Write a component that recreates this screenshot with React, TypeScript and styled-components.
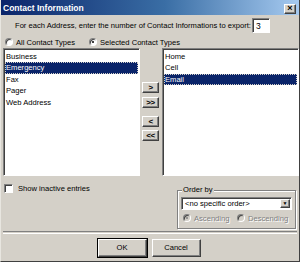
import { styled, createGlobalStyle } from "styled-components";

const GlobalStyle = createGlobalStyle`
  html, body {
    margin: 0;
    padding: 0;
    background: #d4d0c8;
  }
  body {
    font-family: "Liberation Sans", Arial, sans-serif;
    font-size: 7.6px;
    color: #000;
  }
`;

const Window = styled.div`
  width: 300px;
  height: 262px;
  box-sizing: border-box;
  background: #d4d0c8;
  border-left: 1px solid #e8e6e0;
  border-right: 1px solid #404040;
  border-bottom: 1px solid #404040;
  display: flex;
  flex-direction: column;
  overflow: hidden;
`;

const TitleBar = styled.div`
  height: 15px;
  flex-shrink: 0;
  display: flex;
  align-items: center;
  justify-content: space-between;
  padding: 0 3px 0 2px;
  background: linear-gradient(to right, #0a246a 0%, #3a6ea5 55%, #a6caf0 100%);
  color: #fff;
  font-weight: bold;
  font-size: 8.5px;
`;

const Raised = styled.button`
  box-sizing: border-box;
  margin: 0;
  padding: 0;
  background: #d4d0c8;
  border: 1px solid;
  border-color: #fff #404040 #404040 #fff;
  box-shadow: inset -1px -1px 0 #808080;
  font-family: "Liberation Sans", Arial, sans-serif;
  font-size: 7.6px;
  color: #000;
  display: flex;
  align-items: center;
  justify-content: center;
  line-height: 1;
`;

const CloseButton = styled(Raised)`
  width: 12px;
  height: 10px;
  font-size: 9px;
  font-weight: bold;
  margin-top: 2px;
`;

const ExportRow = styled.div`
  margin-top: 3px;
  height: 15px;
  padding-left: 14px;
  display: flex;
  align-items: center;
`;

const Sunken = styled.div`
  box-sizing: border-box;
  background: #fff;
  border: 1px solid;
  border-color: #808080 #fff #fff #808080;
  box-shadow: inset 1px 1px 0 #404040;
`;

const CountBox = styled(Sunken)`
  width: 18px;
  height: 15px;
  margin-left: 1px;
  padding: 2px 0 0 3px;
  font-size: 8.5px;
`;

const RadioRow = styled.div`
  margin-top: 4px;
  height: 10px;
  padding-left: 4px;
  display: flex;
  align-items: center;
`;

const RadioLabel = styled.label<{ $disabled?: boolean; $width?: number }>`
  display: flex;
  align-items: center;
  gap: 3px;
  width: ${(p) => (p.$width ? `${p.$width}px` : "auto")};
  color: ${(p) => (p.$disabled ? "#808080" : "#000")};
  text-shadow: ${(p) => (p.$disabled ? "1px 1px 0 #fff" : "none")};
  white-space: nowrap;
`;

const RadioDot = styled.span<{ $on?: boolean; $disabled?: boolean }>`
  position: relative;
  width: 8px;
  height: 8px;
  flex-shrink: 0;
  box-sizing: border-box;
  border-radius: 50%;
  border: 1px solid;
  border-color: #808080 #fff #fff #808080;
  box-shadow: inset 1px 1px 0 #404040;
  background: ${(p) => (p.$disabled ? "#d4d0c8" : "#fff")};

  &::after {
    content: "";
    display: ${(p) => (p.$on ? "block" : "none")};
    position: absolute;
    left: 2px;
    top: 2px;
    width: 2px;
    height: 2px;
    border-radius: 50%;
    background: ${(p) => (p.$disabled ? "#808080" : "#000")};
  }
`;

const ListsRow = styled.div`
  margin-top: 1px;
  height: 128px;
  padding-left: 2px;
  display: flex;
`;

const ListBox = styled(Sunken)`
  width: 137px;
  height: 100%;
  padding: 2px 1px;
  display: flex;
  flex-direction: column;
`;

const ListItem = styled.div<{ $selected?: boolean }>`
  height: 11.4px;
  line-height: 11.4px;
  padding-left: 1px;
  white-space: nowrap;
  background: ${(p) => (p.$selected ? "#0a246a" : "transparent")};
  color: ${(p) => (p.$selected ? "#fff" : "#000")};
  outline: ${(p) => (p.$selected ? "1px dotted #d4d0c8" : "none")};
  outline-offset: -1px;
`;

const MoveColumn = styled.div`
  width: 17px;
  margin: 0 3px 0 2px;
  padding-top: 34px;
  display: flex;
  flex-direction: column;
`;

const MoveButton = styled(Raised)<{ $gap: number }>`
  width: 17px;
  height: 11px;
  margin-top: ${(p) => p.$gap}px;
  font-weight: bold;
  font-size: 8px;
  letter-spacing: -0.5px;
`;

const BottomArea = styled.div`
  height: 55px;
  display: flex;
  justify-content: space-between;
  padding: 0 3px 0 3px;
`;

const CheckLabel = styled.label`
  margin-top: 8px;
  height: 9px;
  display: flex;
  align-items: center;
  gap: 5px;
  white-space: nowrap;
`;

const CheckBox = styled.span`
  width: 9px;
  height: 9px;
  box-sizing: border-box;
  background: #fff;
  border: 1px solid;
  border-color: #808080 #fff #fff #808080;
  box-shadow: inset 1px 1px 0 #404040;
`;

const GroupBox = styled.div`
  position: relative;
  margin-top: 14px;
  width: 119px;
  height: 39px;
  box-sizing: border-box;
  padding: 6px 3px 0 3px;
  border: 1px solid #808080;
  box-shadow: 1px 1px 0 #fff, inset 1px 1px 0 #fff;
  display: flex;
  flex-direction: column;
  gap: 3px;
`;

const GroupTitle = styled.span`
  position: absolute;
  left: 4px;
  top: -6px;
  padding: 0 1px;
  line-height: 10px;
  background: #d4d0c8;
`;

const Combo = styled(Sunken)`
  height: 13px;
  display: flex;
  align-items: center;
  padding: 0 1px 0 3px;
  justify-content: space-between;
`;

const ComboArrow = styled(Raised)`
  width: 10px;
  height: 9px;
  font-size: 5px;
`;

const SortRow = styled.div`
  display: flex;
  align-items: center;
  padding-left: 2px;
  height: 10px;
`;

const Separator = styled.div`
  margin: 0 2px;
  height: 1px;
  border-top: 1px solid #808080;
  border-bottom: 1px solid #fff;
`;

const ButtonRow = styled.div`
  margin-top: 5px;
  display: flex;
  justify-content: center;
  gap: 5px;
  padding-right: 2px;
`;

const DialogButton = styled(Raised)<{ $default?: boolean }>`
  width: 49px;
  height: 18px;
  ${(p) => (p.$default ? `outline: 1px solid #000; outline-offset: 0;` : "")}
`;

const available = ["Business", "Emergency", "Fax", "Pager", "Web Address"];
const selected = ["Home", "Cell", "Email"];

export default function App() {
  return (
    <>
      <GlobalStyle />
      <Window>
        <TitleBar>
          <span>Contact Information</span>
          <CloseButton>×</CloseButton>
        </TitleBar>

        <ExportRow>
          <span>For each Address, enter the number of Contact Informations to export:</span>
          <CountBox>3</CountBox>
        </ExportRow>

        <RadioRow>
          <RadioLabel $width={84}>
            <RadioDot />
            All Contact Types
          </RadioLabel>
          <RadioLabel>
            <RadioDot $on />
            Selected Contact Types
          </RadioLabel>
        </RadioRow>

        <ListsRow>
          <ListBox>
            {available.map((name) => (
              <ListItem key={name} $selected={name === "Emergency"}>
                {name}
              </ListItem>
            ))}
          </ListBox>
          <MoveColumn>
            <MoveButton $gap={0}>&gt;</MoveButton>
            <MoveButton $gap={4}>&gt;&gt;</MoveButton>
            <MoveButton $gap={8}>&lt;</MoveButton>
            <MoveButton $gap={3}>&lt;&lt;</MoveButton>
          </MoveColumn>
          <ListBox>
            {selected.map((name) => (
              <ListItem key={name} $selected={name === "Email"}>
                {name}
              </ListItem>
            ))}
          </ListBox>
        </ListsRow>

        <BottomArea>
          <CheckLabel>
            <CheckBox />
            Show inactive entries
          </CheckLabel>
          <GroupBox>
            <GroupTitle>Order by</GroupTitle>
            <Combo>
              <span>&lt;no specific order&gt;</span>
              <ComboArrow>▼</ComboArrow>
            </Combo>
            <SortRow>
              <RadioLabel $disabled $width={54}>
                <RadioDot $on $disabled />
                Ascending
              </RadioLabel>
              <RadioLabel $disabled>
                <RadioDot $disabled />
                Descending
              </RadioLabel>
            </SortRow>
          </GroupBox>
        </BottomArea>

        <Separator />

        <ButtonRow>
          <DialogButton $default>OK</DialogButton>
          <DialogButton>Cancel</DialogButton>
        </ButtonRow>
      </Window>
    </>
  );
}
